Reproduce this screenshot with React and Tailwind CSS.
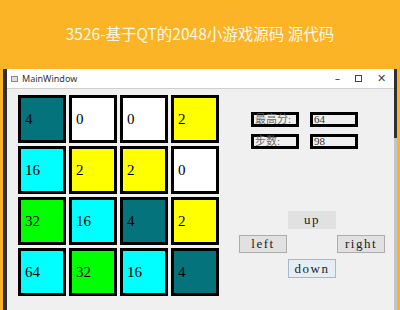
import React from 'react';

// game board values + colours
const board = [
  [4, 0, 0, 2],
  [16, 2, 2, 0],
  [32, 16, 4, 2],
  [64, 32, 16, 4],
];

const tileColor = {
  0: 'bg-white',
  2: 'bg-[#ffff00]',
  4: 'bg-[#04737b]',
  16: 'bg-[#00ffff]',
  32: 'bg-[#00ff00]',
  64: 'bg-[#00ffff]',
};

function Tile({ v }) {
  return (
    <div className={`w-[48px] h-[48px] border-[3px] border-black flex items-center pl-[4px] text-[15px] text-black ${tileColor[v]}`}>
      {v}
    </div>
  );
}

function InfoBox({ children, dim }) {
  return (
    <div className={`w-[48px] h-[15px] border-[3px] border-black bg-[#f0f0f0] flex items-center pl-[1px] text-[11px] leading-none ${dim ? 'text-[#6a6a6a]' : 'text-[#333]'}`}>
      {children}
    </div>
  );
}

function Btn({ children, className = '' }) {
  return (
    <button className={`h-[18px] w-[48px] flex items-center justify-center text-[13px] tracking-[1.5px] text-[#222] ${className}`}>
      {children}
    </button>
  );
}

export default function App() {
  return (
    <div className="w-[400px] h-[310px] overflow-hidden bg-[#fbb426] flex flex-col" style={{ fontFamily: '"Liberation Serif", "Noto Sans CJK SC", serif' }}>
      <div className="h-[69px] pb-[1px] flex items-center justify-center text-[15.5px] text-[#fff8e8]" style={{ fontFamily: '"Noto Sans CJK SC", "Noto Sans", sans-serif' }}>
        3526-基于QT的2048小游戏源码 源代码
      </div>

      <div className="flex flex-1 ml-[3px] w-[394px]">
        <div className="w-[4px] bg-[#2f2f2f]" />

        <div className="flex-1 flex flex-col bg-[#f0f0f0]">
          {/* title bar */}
          <div className="h-[20px] bg-white flex items-center border-b border-[#cfcfcf] text-[9px] text-[#333]" style={{ fontFamily: '"Noto Sans", sans-serif' }}>
            <div className="ml-[4px] w-[7px] h-[6px] border border-[#8a8a8a] bg-[#dcdcdc] mr-[4px]" />
            <span>MainWindow</span>
            <div className="ml-auto flex items-center gap-[15px] pr-[8px] text-[#444]">
              <span className="text-[10px]">–</span>
              <div className="w-[7px] h-[7px] border border-[#444]" />
              <span className="text-[11px]">✕</span>
            </div>
          </div>

          <div className="flex pl-[11px] pt-[6px]">
            <div className="grid grid-cols-4 gap-[3px]">
              {board.flat().map((v, i) => (
                <Tile key={i} v={v} />
              ))}
            </div>

            <div className="ml-[20px] flex flex-col">
              <div className="pl-[12px] mt-[17px] flex flex-col gap-[7px]">
                <div className="flex gap-[11px]">
                  <InfoBox dim>最高分:</InfoBox>
                  <InfoBox>64</InfoBox>
                </div>
                <div className="flex gap-[11px]">
                  <InfoBox dim>步数:</InfoBox>
                  <InfoBox>98</InfoBox>
                </div>
              </div>

              <div className="mt-[62px] grid grid-cols-[48px_48px_48px] gap-x-[1px] gap-y-[6px]">
                <div />
                <Btn className="bg-[#e1e1e1]">up</Btn>
                <div />
                <Btn className="bg-[#e1e1e1] border border-[#adadad]">left</Btn>
                <div />
                <Btn className="bg-[#e1e1e1] border border-[#adadad]">right</Btn>
                <div />
                <Btn className="bg-[#e5edf5] border border-[#a8b8c8] h-[19px]">down</Btn>
                <div />
              </div>
            </div>
          </div>
        </div>

        <div className="w-[3px] flex flex-col">
          <div className="h-[69px] bg-[#2f2f2f]" />
          <div className="flex-1 bg-[#c4c4c4]" />
        </div>
      </div>
    </div>
  );
}
